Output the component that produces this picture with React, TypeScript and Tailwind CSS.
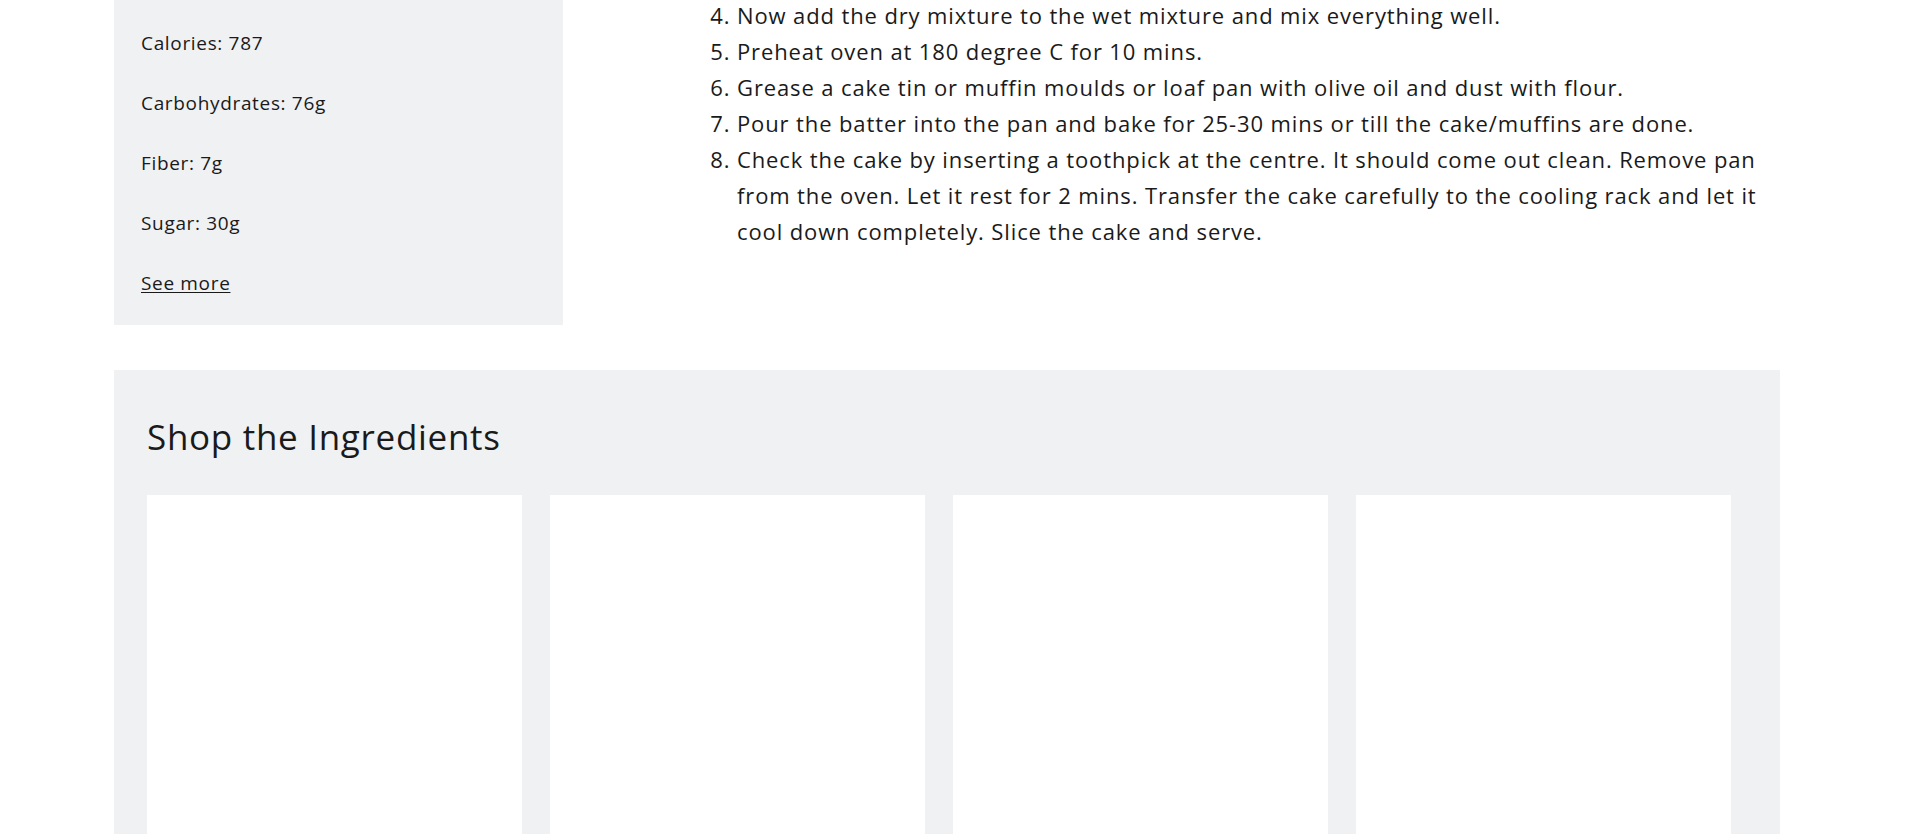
const nutrition = ['Calories: 787', 'Carbohydrates: 76g', 'Fiber: 7g', 'Sugar: 30g'];

function NutritionPanel() {
  return (
    <aside className="w-[449px] shrink-0 bg-[#f0f1f3] px-[27px] pt-[30px] pb-[28px] text-[19px] leading-[27px] tracking-[0.035em]">
      {nutrition.map((item) => (
        <p key={item} className="mb-[33px]">
          {item}
        </p>
      ))}
      <a href="#" className="underline underline-offset-2">
        See more
      </a>
    </aside>
  );
}

function Steps() {
  return (
    <ol start={4} className="list-decimal pl-10 -mt-[3px] text-[22px] leading-[36px] tracking-[0.04em]">
      <li>Now add the dry mixture to the wet mixture and mix everything well.</li>
      <li>Preheat oven at 180 degree C for 10 mins.</li>
      <li>Grease a cake tin or muffin moulds or loaf pan with olive oil and dust with flour.</li>
      <li>Pour the batter into the pan and bake for 25-30 mins or till the cake/muffins are done.</li>
      <li>
        Check the cake by inserting a toothpick at the centre. It should come out clean. Remove pan
        <br />
        from the oven. Let it rest for 2 mins. Transfer the cake carefully to the cooling rack and let it
        <br />
        cool down completely. Slice the cake and serve.
      </li>
    </ol>
  );
}

function ShopIngredients() {
  return (
    <section className="mt-[45px] bg-[#f0f1f3] pl-[33px] pr-[49px] pt-[47px] pb-[40px]">
      <h2 className="text-[35px] leading-[40px] font-medium tracking-[0.02em] mb-[38px]">Shop the Ingredients</h2>
      <div className="grid grid-cols-4 gap-[28px]">
        {[0, 1, 2, 3].map((i) => (
          <div key={i} className="h-[520px] bg-white" />
        ))}
      </div>
    </section>
  );
}

export default function App() {
  return (
    <div className="min-h-screen bg-white font-['Open_Sans',sans-serif] text-[#1a1a1a]">
      <div className="ml-[114px] w-[1666px]">
        <div className="flex">
          <NutritionPanel />
          <div className="flex-1 pl-[134px]">
            <Steps />
          </div>
        </div>
        <ShopIngredients />
      </div>
    </div>
  );
}
